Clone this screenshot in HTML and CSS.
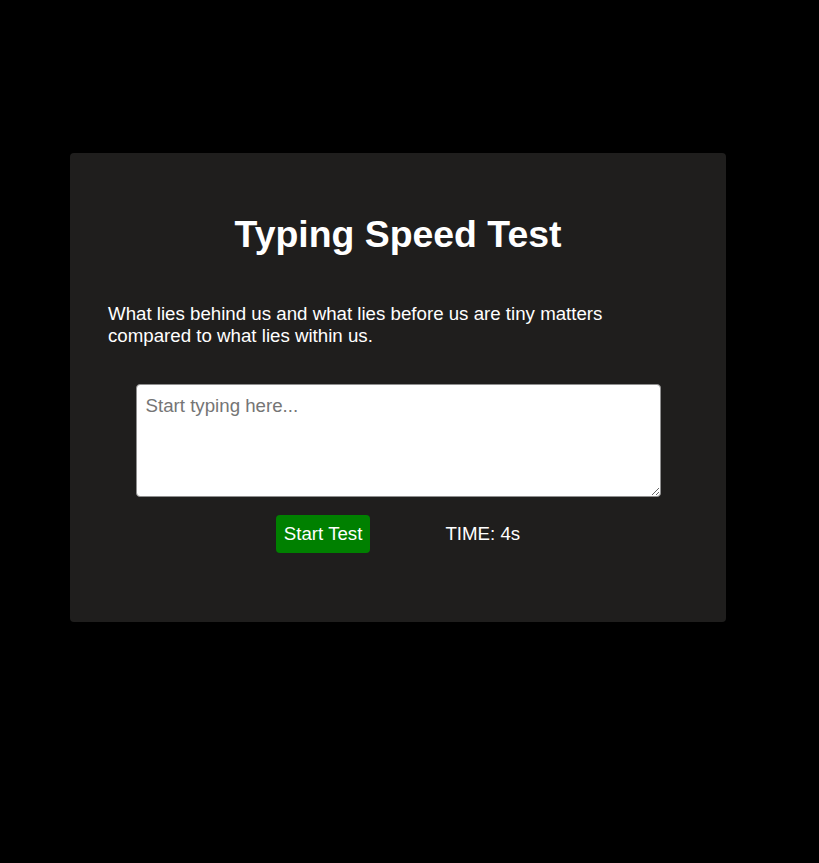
FILE: index.html
```html
<!DOCTYPE html>
<html lang="en">
<head>
<meta charset="utf-8">
<title>Typing Speed Test</title>
<link rel="stylesheet" href="styles.css">
</head>
<body>
<main class="card">
  <h1 class="title">Typing Speed Test</h1>
  <p class="quote">What lies behind us and what lies before us are tiny matters compared to what lies within us.</p>
  <textarea class="input" placeholder="Start typing here..."></textarea>
  <div class="controls">
    <button class="start">Start Test</button>
    <span class="timer">TIME: 4s</span>
  </div>
</main>
</body>
</html>
```
FILE: styles.css
```css
html, body {
  margin: 0;
  padding: 0;
  background: #000;
  font-family: "Liberation Sans", Arial, sans-serif;
  color: #fff;
}
.card {
  box-sizing: border-box;
  width: 656px;
  height: 469px;
  margin: 153px 0 0 70px;
  padding: 60px 38px 0;
  background: #1f1e1d;
  border-radius: 4px;
}
.title {
  margin: 0;
  font-size: 37.4px;
  line-height: 43px;
  font-weight: bold;
  text-align: center;
}
.quote {
  margin: 47px 0 0;
  max-width: 560px;
  font-size: 18.7px;
  line-height: 22px;
}
.input {
  display: block;
  box-sizing: border-box;
  width: 525px;
  height: 113px;
  margin: 37px auto 0;
  padding: 10px 9px;
  border: 1px solid #8f8f8f;
  border-radius: 4px;
  background: #fff;
  font-family: "Liberation Sans", Arial, sans-serif;
  font-size: 18.7px;
  color: #000;
}
.input::placeholder {
  color: #757575;
}
.controls {
  display: flex;
  justify-content: center;
  align-items: center;
  gap: 75px;
  margin-top: 18px;
}
.start {
  padding: 8px;
  border: none;
  border-radius: 4px;
  background: #008000;
  color: #fff;
  font-family: "Liberation Sans", Arial, sans-serif;
  font-size: 18.7px;
  line-height: 22px;
}
.timer {
  font-size: 18.7px;
}
```
